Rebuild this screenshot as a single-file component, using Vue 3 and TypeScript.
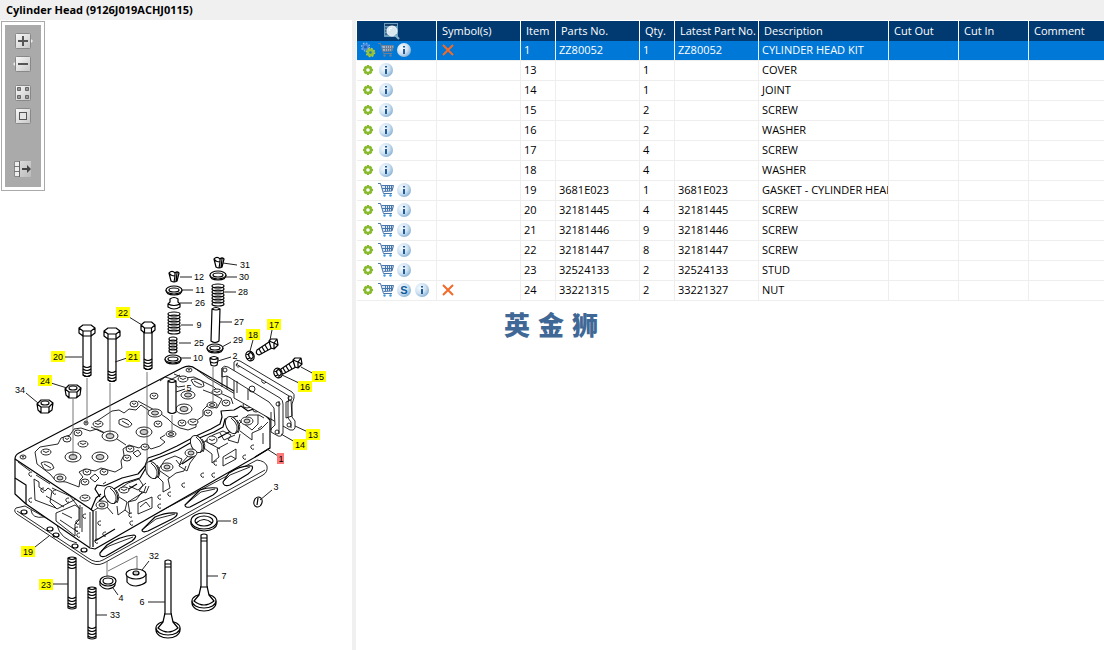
<script setup lang="ts">
import { ref } from 'vue'

type IconName = 'gear' | 'gears' | 'cart' | 'stock' | 'info'

interface Part {
  item: number
  icons: IconName[]
  excluded?: boolean
  partNo?: string
  qty: number
  latest?: string
  description: string
}

interface Callout {
  n: number
  x: number
  y: number
  line: [number, number, number, number]
  listed?: boolean
}

const parts: Part[] = [
  { item: 1, icons: ['gears', 'cart', 'info'], excluded: true, partNo: 'ZZ80052', qty: 1, latest: 'ZZ80052', description: 'CYLINDER HEAD KIT' },
  { item: 13, icons: ['gear', 'info'], qty: 1, description: 'COVER' },
  { item: 14, icons: ['gear', 'info'], qty: 1, description: 'JOINT' },
  { item: 15, icons: ['gear', 'info'], qty: 2, description: 'SCREW' },
  { item: 16, icons: ['gear', 'info'], qty: 2, description: 'WASHER' },
  { item: 17, icons: ['gear', 'info'], qty: 4, description: 'SCREW' },
  { item: 18, icons: ['gear', 'info'], qty: 4, description: 'WASHER' },
  { item: 19, icons: ['gear', 'cart', 'info'], partNo: '3681E023', qty: 1, latest: '3681E023', description: 'GASKET - CYLINDER HEAD' },
  { item: 20, icons: ['gear', 'cart', 'info'], partNo: '32181445', qty: 4, latest: '32181445', description: 'SCREW' },
  { item: 21, icons: ['gear', 'cart', 'info'], partNo: '32181446', qty: 9, latest: '32181446', description: 'SCREW' },
  { item: 22, icons: ['gear', 'cart', 'info'], partNo: '32181447', qty: 8, latest: '32181447', description: 'SCREW' },
  { item: 23, icons: ['gear', 'cart', 'info'], partNo: '32524133', qty: 2, latest: '32524133', description: 'STUD' },
  { item: 24, icons: ['gear', 'cart', 'stock', 'info'], excluded: true, partNo: '33221315', qty: 2, latest: '33221327', description: 'NUT' },
]

const headings = ['Symbol(s)', 'Item', 'Parts No.', 'Qty.', 'Latest Part No.', 'Description', 'Cut Out', 'Cut In', 'Comment']
const iconLabels: Record<IconName, string> = {
  gear: 'Part details',
  gears: 'Kit details',
  cart: 'Add to cart',
  stock: 'Supersession',
  info: 'Information',
}

const selected = ref(1)

const callouts: Callout[] = [
  { n: 12, x: 199, y: 277, line: [180, 277, 192, 277] },
  { n: 11, x: 200, y: 290, line: [182, 290, 193, 290] },
  { n: 26, x: 200, y: 303, line: [180, 303, 192, 303] },
  { n: 9, x: 199, y: 325, line: [181, 325, 193, 325] },
  { n: 25, x: 199, y: 343, line: [179, 343, 191, 343] },
  { n: 10, x: 198, y: 358, line: [181, 358, 191, 358] },
  { n: 31, x: 245, y: 265, line: [223, 263, 237, 265] },
  { n: 30, x: 244, y: 277, line: [226, 277, 237, 277] },
  { n: 28, x: 243, y: 292, line: [225, 292, 236, 292] },
  { n: 27, x: 239, y: 322, line: [220, 322, 232, 322] },
  { n: 29, x: 238, y: 340, line: [222, 347, 231, 342] },
  { n: 2, x: 235, y: 356, line: [218, 361, 231, 357] },
  { n: 5, x: 189, y: 388, line: [176, 392, 185, 389] },
  { n: 17, x: 274, y: 325, line: [272, 330, 270, 340], listed: true },
  { n: 18, x: 253, y: 335, line: [253, 340, 250, 351], listed: true },
  { n: 15, x: 319, y: 377, line: [301, 367, 314, 374], listed: true },
  { n: 16, x: 305, y: 387, line: [282, 375, 299, 383], listed: true },
  { n: 22, x: 123, y: 313, line: [129, 317, 142, 325], listed: true },
  { n: 20, x: 58, y: 357, line: [65, 357, 82, 357], listed: true },
  { n: 21, x: 133, y: 357, line: [115, 362, 127, 358], listed: true },
  { n: 24, x: 45, y: 381, line: [51, 383, 67, 388], listed: true },
  { n: 34, x: 20, y: 390, line: [26, 393, 38, 403] },
  { n: 19, x: 28, y: 552, line: [35, 547, 49, 536], listed: true },
  { n: 13, x: 313, y: 435, line: [295, 426, 308, 432], listed: true },
  { n: 14, x: 300, y: 445, line: [281, 434, 295, 442], listed: true },
  { n: 1, x: 281, y: 459, line: [267, 449, 278, 456], listed: true },
  { n: 3, x: 276, y: 487, line: [272, 490, 260, 500] },
  { n: 23, x: 46, y: 585, line: [52, 584, 68, 584], listed: true },
  { n: 33, x: 115, y: 615, line: [96, 615, 107, 615] },
  { n: 4, x: 121, y: 598, line: [113, 588, 118, 595] },
  { n: 32, x: 154, y: 556, line: [149, 561, 142, 570] },
  { n: 6, x: 142, y: 602, line: [148, 602, 165, 602] },
  { n: 7, x: 224, y: 576, line: [207, 576, 218, 576] },
  { n: 8, x: 235, y: 521, line: [218, 521, 231, 521] },
]

// Long head bolts: centre, top of head, head half-width, end of shank.
const bolts = [
  { x: 87, top: 325, w: 8, end: 376 },
  { x: 112, top: 328, w: 8, end: 381 },
  { x: 148, top: 322, w: 7, end: 369 },
]
const boltHead = (x: number, t: number, w: number) =>
  `M${x - w} ${t + 3}L${x - w / 2} ${t}H${x + w / 2}L${x + w} ${t + 3}V${t + 8}L${x + w / 2} ${t + 11}H${x - w / 2}L${x - w} ${t + 8}Z` +
  `M${x - w} ${t + 3}L${x - w / 2} ${t + 6}H${x + w / 2}L${x + w} ${t + 3}M${x - w / 2} ${t + 6}V${t + 11}M${x + w / 2} ${t + 6}V${t + 11}`
const threads = (x: number, w: number, from: number, to: number, step = 3) => {
  let d = ''
  for (let y = from; y < to; y += step) d += `M${x - w} ${y}Q${x} ${y + 3} ${x + w} ${y}`
  return d
}

const springs = [
  { x: 174, y: 314, w: 6, h: 20, step: 3 },
  { x: 173, y: 339, w: 4, h: 12, step: 3 },
  { x: 218, y: 286, w: 6, h: 18, step: 3 },
]
const coil = (y: number, h: number, step: number) =>
  Array.from({ length: Math.floor(h / step) + 1 }, (_, i) => y + i * step)

const studs = [
  { x: 72, y: 558, end: 608 },
  { x: 92, y: 588, end: 638 },
]

// Seats with an inner bore on the machined face.
const seats = [
  [110, 436, 8, 5], [144, 432, 8, 5], [73, 457, 8, 5], [100, 457, 8, 5], [155, 413, 7, 4],
  [184, 409, 8, 5], [188, 395, 7, 4], [212, 405, 5, 3], [171, 434, 5, 3], [191, 453, 6, 4],
  [167, 467, 6, 4], [102, 505, 6, 4], [247, 421, 6, 4], [60, 478, 6, 4],
]
// Plain raised bosses.
const bosses = [
  [46, 452, 5, 3], [67, 439, 4, 3], [78, 433, 4, 3], [83, 444, 5, 3], [98, 424, 5, 3], [86, 423, 2, 2],
  [87, 472, 4, 3], [104, 472, 4, 3], [85, 482, 4, 3], [85, 498, 5, 3], [130, 449, 4, 3], [127, 458, 4, 3],
  [145, 447, 4, 3], [134, 404, 4, 3], [154, 396, 4, 3], [183, 379, 5, 3], [217, 392, 5, 3], [226, 403, 4, 3],
  [208, 413, 4, 3], [193, 422, 5, 3], [182, 423, 4, 3], [212, 440, 5, 4], [247, 405, 4, 3], [23, 457, 3, 2],
  [189, 370, 3, 2], [256, 410, 3, 2], [124, 490, 5, 3], [158, 424, 4, 3],
]
const holes = [
  [31, 474], [31, 500], [43, 490], [55, 492], [68, 500], [85, 516], [78, 522], [77, 529], [79, 535],
  [100, 523], [97, 541], [131, 515], [132, 523], [245, 457], [253, 447], [214, 475], [216, 463], [203, 475],
  [170, 494], [160, 497], [160, 506], [184, 485], [105, 534],
]
const ports = [[111, 495], [152, 470], [197, 444], [232, 425]]
const gasketHoles = [[24, 512], [50, 529], [56, 535], [75, 546], [84, 550]]
</script>

<template>
  <div class="viewer">
    <h1 class="title">Cylinder Head (9126J019ACHJ0115)</h1>
    <main class="split">
      <section class="drawing" aria-label="Exploded view">
        <svg class="diagram" viewBox="0 20 352 630" role="img" aria-label="Cylinder head exploded drawing">
          <defs>
            <linearGradient id="face" x1="0" y1="0" x2="1" y2="1">
              <stop offset="0" stop-color="#fafafa" />
              <stop offset="1" stop-color="#c6c6c6" />
            </linearGradient>
            <radialGradient id="disc" cx=".35" cy=".35" r=".75">
              <stop offset="0" stop-color="#f5faff" />
              <stop offset=".55" stop-color="#cfe1f0" />
              <stop offset="1" stop-color="#79a9d0" />
            </radialGradient>
          </defs>

          <g class="ink">
            <!-- head gasket -->
            <path class="solid" d="M16 508Q13 511 17 514L88 561Q96 567 104 563L263 475Q268 472 267 466Q265 461 257 460L95 546L25 506Z" />
            <path d="M17 511L88 558Q96 564 103 560L265 470" />
            <path class="solid edge" d="M100 553L107 545Q120 536 134 535Q138 536 132 541L106 556Q99 558 100 553ZM142 530L155 517Q166 512 177 513Q178 516 172 519L148 531Q142 533 142 530ZM185 505L200 490Q208 487 217 488Q219 491 213 495L190 507Q185 508 185 505ZM223 482L229 473Q241 465 252 466Q254 469 248 474L230 485Q223 487 223 482Z" />
            <path d="M31 510Q32 519 44 517M57 525Q60 539 77 543M101 551L109 546L133 537M143 529L156 519L175 514M186 504L201 492L215 489M224 481L230 475L250 467" />
            <ellipse v-for="[x, y] in gasketHoles" :key="`g${x}`" class="edge" :cx="x" :cy="y" rx="3" ry="2" />

            <!-- casting outline -->
            <path class="solid edge" d="M15 459Q15 455 19 453L182 368Q190 364 196 369L263 408Q268 411 266 416L270 420V448L257 456L95 549L90 548L26 504L15 494Z" />
            <path class="edge" d="M15 459L89 508L93 511V547M15 478L26 485V504" />
            <path d="M90 512V547M96 511V540M34 479L35 500L56 508M34 479L39 482V487L45 491L48 488L52 491L50 502L57 509L76 499M52 488L70 496L80 509M56 513L75 505L79 508V520L75 524V536L56 521Z" />
            <path d="M46 496L64 507M62 513L72 518M60 520L78 532M80 505V528M82 507V532M18 462L30 471M36 475L50 484" />

            <!-- recesses on the top face -->
            <path d="M35 452L37 464L50 474L56 481L66 482L79 487L80 480L83 477L79 472L85 469L95 471L101 468L115 472L122 468L121 461L124 455L123 449L129 445L139 448L145 444L151 449L160 446L165 442L160 438L165 435M35 452L40 447L58 444L61 438L70 435L74 429L81 428L90 431L97 429L105 433M91 427L117 439L126 445M97 421L112 411L119 410L124 413L129 409L136 410L141 405L151 412" />
            <path d="M138 401L149 407L158 412L168 419L173 424L180 428L188 430L196 427L196 421L203 416L203 410L207 406L217 408L222 399L211 393L203 390M174 374L184 378L194 377L202 381L214 387L220 393L231 398L233 404M196 369L208 378L230 391L251 403M180 375L172 379L165 377L160 381M185 386L178 387L174 384" />
            <path class="edge" d="M100 497L95 489L97 485L104 486L122 478L138 474L145 466L148 458L160 454L177 446L196 436L211 429L220 424L222 417L221 411L234 410L241 406L248 411L256 408" />
            <path class="edge" d="M99 501L109 492L124 483L140 478L150 461L178 450L197 439L214 432L223 427L225 419L238 416M91 510L96 498L101 494" />

            <!-- manifold side -->
            <path d="M103 484L106 482M118 490L128 483L139 479L143 485L139 491L146 493L149 486M117 506L118 515L125 510L130 514L128 502L136 500L142 492M119 497L127 502L125 510M128 502L144 492L146 486M158 470L165 460L175 456L182 459L179 466L187 471L190 463L196 455M157 476L163 482V492L170 488L168 479L176 473L184 471L186 466M160 471L170 478M203 443L213 435L223 431L231 435L228 440L238 443L240 434M204 448L212 454V463L219 457L217 449L228 443M205 441L220 449M239 424L248 415L259 415L264 418M240 431L252 440V433L261 429L268 422M239 420L252 430L258 424V415M93 511L117 496M113 514L107 507M129 486L138 490L146 483M176 460L180 465L188 456M220 433L224 440L235 435" />
            <path class="edge" d="M262 408L265 416M127 490L137 484M182 464L194 456M218 438L231 431M95 541L115 529M255 457L270 448" />
            <path d="M138 503L152 497V508L138 514ZM140 507L146 502L150 507M223 457L236 449V459L223 466ZM225 459L231 456L236 459M258 429L262 426M263 433V444" />
            <g v-for="[x, y] in ports" :key="`p${x}`">
              <ellipse class="solid" :cx="x" :cy="y" rx="6" ry="9" :transform="`rotate(-25 ${x} ${y})`" />
              <path :d="`M${x - 1} ${y - 7}Q${x + 9} ${y + 1} ${x + 3} ${y + 9}M${x + 5} ${y - 5}Q${x + 10} ${y + 1} ${x + 6} ${y + 8}`" />
            </g>
            <g v-for="[x, y, rx, ry] in seats" :key="`s${x}-${y}`">
              <ellipse class="solid" :cx="x" :cy="y" :rx="rx" :ry="ry" />
              <ellipse class="bore" :cx="x" :cy="y" :rx="rx / 2" :ry="ry / 2" />
            </g>
            <g v-for="[x, y, rx, ry] in bosses" :key="`b${x}-${y}`">
              <ellipse class="solid" :cx="x" :cy="y" :rx="rx" :ry="ry" />
              <path :d="`M${x - rx + 2} ${y - 1}Q${x} ${y + 2} ${x + rx - 2} ${y - 1}`" />
            </g>
            <path v-for="[x, y] in holes" :key="`h${x}-${y}`" :d="`M${x + 1} ${y - 2}Q${x - 3} ${y - 2} ${x - 2} ${y + 1}Q${x - 1} ${y + 3} ${x + 1} ${y + 2}`" />
            <path class="solid" d="M119 420Q123 417 128 420L132 424Q130 428 125 427L119 424ZM41 463Q46 460 52 464L54 468Q49 472 44 469ZM191 380Q197 377 203 382L204 386Q199 389 194 385ZM90 478L95 474L99 478L95 482ZM133 453L138 450L141 454L137 457Z" />
            <path d="M122 421L129 425M44 464L51 468M194 381L202 385" />

            <!-- end cover and joint -->
            <path class="solid" d="M234 362Q236 359 240 361L292 392Q295 394 294 398L292 404V417L295 421V428Q294 431 290 430L283 426L234 398Z" />
            <path d="M236 364L289 396L288 403V418L291 422V428M286 402L291 400L292 416L286 418ZM262 380A2 2 0 1 0 266 382M238 363A2 2 0 1 0 240 366" />
            <circle cx="290" cy="398" r="2" /><circle cx="289" cy="425" r="2" />
            <path class="solid" d="M222 368Q224 365 228 367L280 398Q283 400 283 404V433Q282 437 278 436L271 432V429L275 425L274 408L269 402L227 376L222 377Z" />
            <path d="M222 368V387M227 376V389M237 381V393M248 389V400M271 412V430M279 401V434" />
            <circle cx="225" cy="370" r="2" /><circle cx="252" cy="389" r="3" /><circle cx="278" cy="404" r="2" /><circle cx="277" cy="432" r="2" />

            <!-- centre lines -->
            <path class="axis" d="M87 378V422M110 383V435M147 372V475M73 399V456M172 415V434M213 367V404M107 561V580M108 571L137 556V572" />

            <!-- head bolts -->
            <g v-for="b in bolts" :key="`bolt${b.x}`" class="edge">
              <path class="solid" :d="`M${b.x - 4} ${b.top + 10}V${b.end - 1}Q${b.x} ${b.end + 2} ${b.x + 4} ${b.end - 1}V${b.top + 10}`" />
              <path class="solid" :d="boltHead(b.x, b.top, b.w)" />
              <path :d="threads(b.x, 4, b.end - 10, b.end)" />
            </g>

            <!-- nuts -->
            <g v-for="[x, y] in [[73, 385], [45, 400]]" :key="`nut${x}`" class="edge">
              <path class="solid" :d="`M${x - 8} ${y + 4}L${x - 4} ${y}H${x + 4}L${x + 8} ${y + 3}L${x + 7} ${y + 10}L${x + 3} ${y + 13}H${x - 4}L${x - 7} ${y + 10}ZM${x - 8} ${y + 4}L${x - 4} ${y + 7}H${x + 4}L${x + 8} ${y + 3}M${x - 4} ${y + 7}V${y + 13}M${x + 4} ${y + 7}V${y + 13}`" />
              <ellipse :cx="x" :cy="y + 3" rx="4" ry="2" />
            </g>

            <!-- valve collets, retainers and caps -->
            <g v-for="[x, y] in [[174, 272], [219, 258]]" :key="`collet${x}`" class="edge">
              <path class="solid" :d="`M${x - 5} ${y + 1}L${x - 3} ${y + 9}Q${x} ${y + 11} ${x + 3} ${y + 9}L${x + 5} ${y + 1}Q${x + 3} ${y - 1} ${x + 1} ${y + 1}L${x + 1} ${y + 4}Q${x - 3} ${y + 4} ${x - 5} ${y + 1}ZM${x + 1} ${y + 4}L${x} ${y + 10}M${x - 5} ${y + 1}Q${x - 2} ${y - 2} ${x + 1} ${y + 1}M${x + 3} ${y + 1}L${x + 2} ${y + 9}`" />
            </g>
            <g v-for="[x, y] in [[174, 290], [218, 275], [173, 359], [215, 348]]" :key="`ring${x}-${y}`" class="edge">
              <path class="solid" :d="`M${x - 8} ${y}Q${x - 8} ${y + 5} ${x} ${y + 5}T${x + 8} ${y}`" />
              <ellipse class="solid" :cx="x" :cy="y" rx="8" ry="4" />
              <ellipse :cx="x" :cy="y" rx="5" ry="2" />
            </g>
            <path class="solid edge" d="M170 299Q174 296 178 299V302L180 304V307Q174 311 168 307V304L170 302ZM168 304Q174 307 180 304" />

            <g v-for="s in springs" :key="`spring${s.x}-${s.y}`" class="edge">
              <ellipse v-for="y in coil(s.y, s.h, s.step)" :key="y" :cx="s.x" :cy="y" :rx="s.w" ry="2" />
            </g>

            <!-- guides and insert -->
            <path class="solid edge" d="M212 309L211 341Q215 344 219 341L220 309Q216 306 212 309ZM212 309Q216 311 220 309" />
            <path class="solid edge" d="M168 381V412Q172 415 176 412V381Q172 378 168 381ZM168 381Q172 384 176 381" />
            <path class="solid edge" d="M210 358Q214 355 218 358V360L217 365Q214 367 211 365L210 360ZM210 358Q214 361 218 358M211 362Q214 364 217 362" />

            <!-- short screws and spring washers -->
            <g v-for="[x, y] in [[273, 344], [297, 363]]" :key="`screw${x}`" class="edge">
              <path class="solid" :d="`M${x - 4} ${y - 2}L${x - 16} ${y + 6}Q${x - 18} ${y + 10} ${x - 14} ${y + 11}L${x - 1} ${y + 4}Z`" />
              <path :d="`M${x - 14} ${y + 5}l3 5M${x - 11} ${y + 3}l3 5M${x - 8} ${y + 1}l3 5`" />
              <path class="solid" :d="`M${x - 4} ${y - 3}L${x - 2} ${y - 5}L${x + 4} ${y - 5}L${x + 5} ${y + 1}L${x + 1} ${y + 5}L${x - 2} ${y + 4}ZM${x - 4} ${y - 3}L${x + 1} ${y - 1}L${x + 5} ${y + 1}M${x + 1} ${y - 1}L${x + 4} ${y - 5}M${x + 1} ${y - 1}V${y + 5}`" />
            </g>
            <g v-for="[x, y] in [[250, 356], [278, 373]]" :key="`washer${x}`" class="edge">
              <ellipse class="solid" :cx="x" :cy="y" rx="4" ry="5" :transform="`rotate(-25 ${x} ${y})`" />
              <ellipse :cx="x + 1" :cy="y" rx="2" ry="3" :transform="`rotate(-25 ${x} ${y})`" />
              <path :d="`M${x - 4} ${y - 2}l3 1M${x - 3} ${y + 3}l3 -1M${x + 1} ${y + 5}l0 -2`" />
            </g>

            <!-- valve seats, plugs and valves -->
            <g class="edge">
              <path class="solid" d="M191 521V524Q193 530 204 531Q216 530 217 524V521" />
              <ellipse class="solid" cx="204" cy="521" rx="13" ry="8" />
              <ellipse cx="204" cy="521" rx="9" ry="5" /><path d="M196 523Q204 516 212 523" />
            </g>
            <g class="edge">
              <path class="solid" d="M100 581V585Q103 589 108 589Q114 588 115 585V581" />
              <ellipse class="solid" cx="108" cy="581" rx="8" ry="5" /><ellipse cx="108" cy="581" rx="5" ry="3" />
              <path class="solid" d="M127 574V582Q130 586 136 586Q143 585 146 582V574" />
              <ellipse class="solid" cx="136" cy="574" rx="10" ry="5" /><ellipse class="bore" cx="136" cy="573" rx="3" ry="2" />
              <ellipse class="solid" cx="258" cy="502" rx="4" ry="5" transform="rotate(20 258 502)" /><path d="M258 498L257 505" />
            </g>
            <g v-for="[x, t, b] in [[168, 561, 628], [204, 535, 601]]" :key="`valve${x}`" class="edge">
              <ellipse class="solid" :cx="x" :cy="b + 2" rx="12" ry="8" />
              <ellipse class="solid" :cx="x" :cy="b" rx="12" ry="7" />
              <path class="solid" :d="`M${x - 3} ${t}Q${x} ${t - 2} ${x + 3} ${t}V${b - 15}L${x + 5} ${b - 6}L${x + 10} ${b}Q${x} ${b + 8} ${x - 10} ${b}L${x - 5} ${b - 6}L${x - 3} ${b - 15}Z`" />
              <path :d="`M${x - 3} ${t + 3}H${x + 3}M${x - 3} ${t + 6}H${x + 3}M${x - 4} ${b - 14}H${x + 4}`" />
            </g>
            <g v-for="s in studs" :key="`stud${s.x}`" class="edge">
              <path class="solid" :d="`M${s.x - 4} ${s.y}Q${s.x} ${s.y - 2} ${s.x + 4} ${s.y}V${s.end}Q${s.x} ${s.end + 2} ${s.x - 4} ${s.end}Z`" />
              <path :d="threads(s.x, 4, s.y, s.y + 12) + threads(s.x, 4, s.end - 11, s.end - 1)" />
            </g>
          </g>

          <g v-for="c in callouts" :key="c.n">
            <line class="leader" :x1="c.line[0]" :y1="c.line[1]" :x2="c.line[2]" :y2="c.line[3]" />
            <rect
              v-if="c.listed"
              :class="c.n === selected ? 'tag picked' : 'tag'"
              :x="c.x - (c.n > 9 ? 7 : 4)" :y="c.y - 6" :width="c.n > 9 ? 14 : 7" height="11"
            />
            <text class="number" :x="c.x" :y="c.y + 3">{{ c.n }}</text>
          </g>
        </svg>

        <div class="palette">
          <div class="tools" role="toolbar" aria-label="Drawing tools">
            <button type="button" aria-label="Zoom in">
              <svg viewBox="0 0 18 16"><path d="M16 5l3 3-3 3z" fill="#eee" /><rect x="1.500" y=".5" width="15" height="15" rx="1" fill="url(#face)" stroke="#888" /><path d="M4 8h10M9 3v10" stroke="#555" stroke-width="2" /></svg>
            </button>
            <button type="button" aria-label="Zoom out">
              <svg viewBox="0 0 18 16"><path d="M2 5l-3 3 3 3z" fill="#eee" /><rect x="1.500" y=".5" width="15" height="15" rx="1" fill="url(#face)" stroke="#888" /><path d="M4 8h10" stroke="#555" stroke-width="2" /></svg>
            </button>
            <button type="button" class="apart" aria-label="Thumbnails">
              <svg viewBox="0 0 18 16"><rect x="1.500" y=".5" width="15" height="15" rx="1" fill="url(#face)" stroke="#888" /><path d="M3.500 2.500h3v3h-3zM11.500 2.500h3v3h-3zM3.500 10.500h3v3h-3zM11.500 10.500h3v3h-3z" fill="#999" stroke="#666" /></svg>
            </button>
            <button type="button" aria-label="Fit to window">
              <svg viewBox="0 0 18 16"><rect x="1.500" y=".5" width="15" height="15" rx="1" fill="url(#face)" stroke="#888" /><rect x="5.500" y="4.500" width="7" height="7" fill="#e4e4e4" stroke="#555" /></svg>
            </button>
            <button type="button" class="last" aria-label="Show parts list">
              <svg viewBox="0 0 18 16"><path d="M.5.5h5v15h-5z" fill="#eee" stroke="#888" /><path d="M0 5.500h6M0 10.500h6" stroke="#777" /><path d="M6 0h11v16h-11z" fill="url(#face)" opacity=".6" /><path d="M5.500 0v16" stroke="#666" /><path d="M8 7h5v-3l4 4-4 4v-3h-5z" fill="#444" /></svg>
            </button>
          </div>
        </div>
      </section>

      <section class="list">
        <table>
          <colgroup>
            <col class="w80" /><col class="w84" /><col class="w35" /><col class="w84" /><col class="w35" />
            <col class="w84" /><col class="w130" /><col class="w70" /><col class="w70" /><col />
          </colgroup>
          <thead>
            <tr>
              <th scope="col" class="search">
                <button type="button" aria-label="Search parts">
                  <svg viewBox="0 0 16 16"><path d="M0 0h14v14h-14z" fill="#6d9dbd" /><path d="M1 1h12v2h-12z" fill="#123e68" /><path d="M1 5h2M1 8h2M1 11h2" stroke="#123e68" /><circle cx="8" cy="8" r="5" fill="#d8e6ef" stroke="#eff6fa" /><path d="M5 8a3 3 0 0 1 3-3" fill="none" stroke="#fff" /><path d="M11 12l4 4" stroke="#87b2cc" stroke-width="2" /></svg>
                </button>
              </th>
              <th v-for="h in headings" :key="h" scope="col">{{ h }}</th>
            </tr>
          </thead>
          <tbody>
            <tr v-for="p in parts" :key="p.item" :class="{ current: p.item === selected }" @click="selected = p.item">
              <td class="actions">
                <div class="icons">
                  <button v-for="icon in p.icons" :key="icon" type="button" :aria-label="iconLabels[icon]">
                    <svg v-if="icon === 'gear'" viewBox="0 0 16 16">
                      <path d="M8 3v10M3 8h10M4.600 4.600l6.800 6.800M11.400 4.600l-6.800 6.800" stroke="#8abb30" stroke-width="2.400" />
                      <circle cx="8" cy="8" r="2.900" fill="#fff" stroke="#86b92c" stroke-width="2.200" />
                    </svg>
                    <svg v-else-if="icon === 'gears'" viewBox="0 0 16 16">
                      <circle cx="5.500" cy="5" r="2.500" fill="#1c5fae" stroke="#4b8ee0" stroke-width="2" />
                      <circle cx="5.500" cy="5" r="4" fill="none" stroke="#8db9ef" stroke-width="1.200" stroke-dasharray="1.500 1.640" />
                      <circle cx="10.500" cy="10.500" r="2.600" fill="#1d78bd" stroke="#97c236" stroke-width="2.600" />
                      <circle cx="10.500" cy="10.500" r="4.200" fill="none" stroke="#a8cf4d" stroke-width="1.300" stroke-dasharray="1.650 1.650" />
                    </svg>
                    <svg v-else-if="icon === 'cart'" class="cart" viewBox="0 0 16 16">
                      <path class="mesh" d="M4 4h12l-2 5h-9z" />
                      <path d="M0 1.500h2.500l3 10h8.500M3.500 3.500h12l-1.500 5.500-8.500.5M4 6.500h11M7.500 4v5M9.500 4v5M11.500 4v5M13.500 4v5" />
                      <circle class="wheel" cx="6.500" cy="13.500" r="1.200" /><circle class="wheel" cx="12.500" cy="13.500" r="1.200" />
                    </svg>
                    <svg v-else viewBox="0 0 16 16">
                      <circle cx="8" cy="8" r="7" fill="url(#disc)" />
                      <path v-if="icon === 'info'" d="M7 4h2v1.500h-2zM7 7h2v5h-2z" fill="#1f5b98" />
                      <text v-else x="8" y="12" class="letter">S</text>
                    </svg>
                  </button>
                </div>
              </td>
              <td>
                <svg v-if="p.excluded" class="cross" viewBox="0 0 12 12" role="img" aria-label="Not serviced">
                  <path d="M1 1l10 10M11 1L1 11" fill="none" stroke="#f26a2a" stroke-width="2" />
                </svg>
              </td>
              <td>{{ p.item }}</td>
              <td>{{ p.partNo }}</td>
              <td>{{ p.qty }}</td>
              <td>{{ p.latest }}</td>
              <td>{{ p.description }}</td>
              <td></td>
              <td></td>
              <td></td>
            </tr>
          </tbody>
        </table>
        <p class="brand" lang="zh"><span>英</span><span>金</span><span>狮</span></p>
      </section>
    </main>
  </div>
</template>

<style>
body {
  margin: 0;
  background: #fff;
}
</style>

<style scoped>
.viewer {
  display: flex;
  flex-direction: column;
  min-height: 100vh;
  font-family: "Open Sans", "Noto Sans", "Noto Sans CJK SC", sans-serif;
  font-size: 11px;
  color: #000;
  background: #fff;
}
.title {
  margin: 0;
  padding-left: 6px;
  background: #f0f0f0;
  font-size: 11px;
  line-height: 20px;
  font-weight: 700;
}
.split {
  flex: 1;
  display: grid;
  grid-template-columns: 352px minmax(0, 1fr);
}
.drawing {
  display: grid;
  align-items: start;
  justify-items: start;
}
.diagram,
.palette {
  grid-area: 1 / 1;
}
.diagram {
  display: block;
  width: 100%;
}
.palette {
  margin: 1px;
  padding: 3px;
  border: 1px solid #aaa;
  background: #fff;
}
.tools {
  display: flex;
  flex-direction: column;
  align-items: center;
  gap: 7px;
  width: 36px;
  padding: 8px 0 10px;
  background: #aaa;
}
.tools button {
  width: 18px;
  height: 16px;
}
.tools .apart {
  margin-top: 6px;
}
.tools .last {
  margin-top: 30px;
}
button {
  display: block;
  margin: 0;
  padding: 0;
  border: 0;
  background: none;
  cursor: pointer;
}
button svg {
  display: block;
  width: 100%;
  height: 100%;
  overflow: visible;
}

.ink {
  fill: none;
  stroke: #111;
  stroke-width: 0.9;
  stroke-linejoin: round;
}
.ink .solid {
  fill: #fff;
}
.ink .edge {
  stroke: #000;
  stroke-width: 1.2;
}
.ink .bore {
  fill: #ccc;
}
.ink .axis {
  stroke: #666;
}
.leader {
  stroke: #222;
}
.tag {
  fill: #ff0;
}
.tag.picked {
  fill: #f77;
}
.number {
  font-family: "Liberation Sans", Arial, sans-serif;
  font-size: 9px;
  text-anchor: middle;
  fill: #000;
}

.list {
  min-width: 0;
  padding: 1px 0 0 1px;
  border-left: 4px solid #f0f0f0;
  overflow: hidden;
}
table {
  width: 100%;
  table-layout: fixed;
  border-collapse: separate;
  border-spacing: 0;
}
.w80 { width: 80px; }
.w84 { width: 84px; }
.w35 { width: 35px; }
.w130 { width: 130px; }
.w70 { width: 70px; }
th,
td {
  box-sizing: border-box;
  height: 20px;
  padding: 0 0 2px 3px;
  border-right: 1px solid #eee;
  overflow: hidden;
  text-align: left;
  white-space: nowrap;
  line-height: 17px;
}
th {
  padding-left: 5px;
  background: #003a70;
  border-right-color: #fff;
  color: #fff;
  font-weight: 400;
}
td {
  border-bottom: 1px solid #eee;
}
th:last-child,
td:last-child {
  border-right: 0;
}
.search {
  padding: 0;
}
.search button {
  width: 16px;
  height: 16px;
  margin-left: 27px;
}
.actions {
  padding-left: 2px;
}
.icons {
  display: flex;
}
.icons button {
  width: 18px;
  height: 16px;
}
.current td {
  background: #0078d7;
  color: #fff;
}
.cross {
  display: block;
  width: 12px;
  height: 12px;
  margin-left: 2px;
}
.cart {
  fill: none;
  stroke: #4a77aa;
}
.cart .mesh {
  fill: #dbe7f3;
  stroke: none;
}
.cart .wheel {
  fill: #3d9be0;
  stroke: none;
}
.current .cart {
  stroke: #6c7f95;
}
.current .mesh {
  fill: #a3b5c8;
}
.current .wheel {
  fill: #6c7f95;
}
.letter {
  font-family: "Liberation Sans", Arial, sans-serif;
  font-size: 11px;
  font-weight: 700;
  text-anchor: middle;
  fill: #0b5a9c;
  stroke: none;
}
.brand {
  display: flex;
  gap: 8px;
  margin: 6px 0 0 147px;
  font-family: "Noto Sans CJK SC", sans-serif;
  font-size: 26px;
  line-height: 34px;
  font-weight: 900;
  color: #3f6896;
}
</style>
